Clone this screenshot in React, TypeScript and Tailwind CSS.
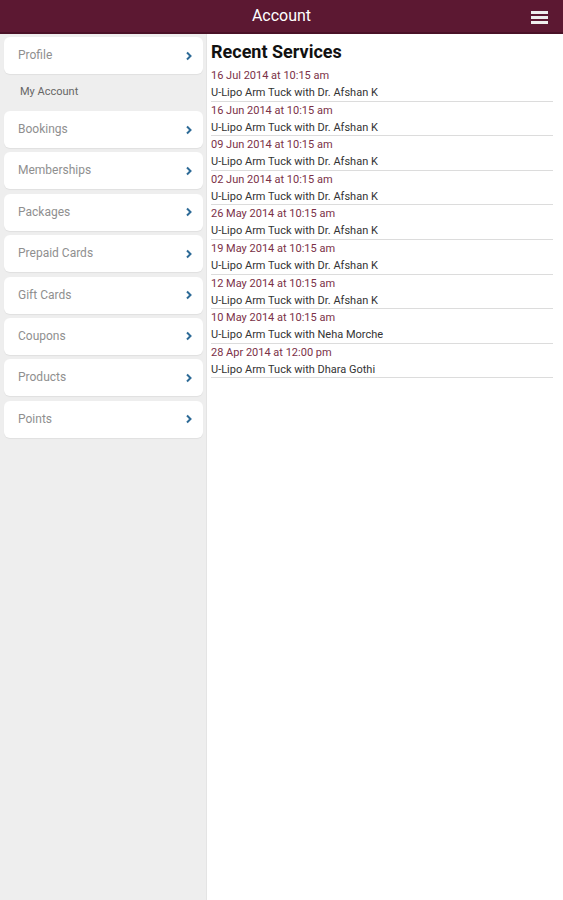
import React from "react";

const menu = ["Bookings", "Memberships", "Packages", "Prepaid Cards", "Gift Cards", "Coupons", "Products", "Points"];

const services = [
  { date: "16 Jul 2014 at 10:15 am", name: "U-Lipo Arm Tuck with Dr. Afshan K" },
  { date: "16 Jun 2014 at 10:15 am", name: "U-Lipo Arm Tuck with Dr. Afshan K" },
  { date: "09 Jun 2014 at 10:15 am", name: "U-Lipo Arm Tuck with Dr. Afshan K" },
  { date: "02 Jun 2014 at 10:15 am", name: "U-Lipo Arm Tuck with Dr. Afshan K" },
  { date: "26 May 2014 at 10:15 am", name: "U-Lipo Arm Tuck with Dr. Afshan K" },
  { date: "19 May 2014 at 10:15 am", name: "U-Lipo Arm Tuck with Dr. Afshan K" },
  { date: "12 May 2014 at 10:15 am", name: "U-Lipo Arm Tuck with Dr. Afshan K" },
  { date: "10 May 2014 at 10:15 am", name: "U-Lipo Arm Tuck with Neha Morche" },
  { date: "28 Apr 2014 at 12:00 pm", name: "U-Lipo Arm Tuck with Dhara Gothi" },
];

function Chevron() {
  return (
    <svg width="8" height="10" viewBox="0 0 8 10" className="text-[#2d6a96]">
      <path d="M2 1.5 L5.5 5 L2 8.5" fill="none" stroke="currentColor" strokeWidth="2" />
    </svg>
  );
}

function MenuCard({ label }: { label: string }) {
  return (
    <div className="h-[37px] bg-white rounded-md shadow-[0_1px_1px_rgba(0,0,0,0.06)] flex items-center justify-between pl-[14px] pr-[10px]">
      <span className="text-[12px] text-[#8f8f8f] -mt-[1px]">{label}</span>
      <Chevron />
    </div>
  );
}

export default function App() {
  return (
    <div className="w-[563px] h-[900px] flex flex-col bg-white font-['Roboto',sans-serif] overflow-hidden">
      <div className="h-[34px] shrink-0 bg-[#5c1832] border-b-2 border-[#4a1127] flex items-center justify-center relative">
        <span className="text-white text-[16px]">Account</span>
        <div className="absolute right-[15px] top-[11px] flex flex-col gap-[2px]">
          <div className="w-[17px] h-[3px] bg-[#eee]" />
          <div className="w-[17px] h-[3px] bg-[#eee]" />
          <div className="w-[17px] h-[3px] bg-[#eee]" />
        </div>
      </div>
      <div className="flex flex-1">
        <div className="w-[207px] shrink-0 bg-[#eeeeee] border-r border-[#e4e4e4] pl-[4px] pr-[3px] pt-[3px] flex flex-col">
          <MenuCard label="Profile" />
          <div className="h-[37px] flex items-center pl-[16px] text-[11px] text-[#666]">My Account</div>
          <div className="flex flex-col gap-[4.4px]">
            {menu.map((m) => (
              <MenuCard key={m} label={m} />
            ))}
          </div>
        </div>
        <div className="flex-1 pl-[4px] pr-[10px] pt-[6px]">
          <div className="text-[18px] font-bold text-[#111] leading-[24px]">Recent Services</div>
          <div className="flex flex-col mt-[3px]">
            {services.map((s, i) => (
              <div key={i} className="h-[34.6px] border-b border-[#dcdcdc] flex flex-col text-[11px] leading-[17px]">
                <span className="text-[#7b3147]">{s.date}</span>
                <span className="text-[#333]">{s.name}</span>
              </div>
            ))}
          </div>
        </div>
      </div>
    </div>
  );
}
